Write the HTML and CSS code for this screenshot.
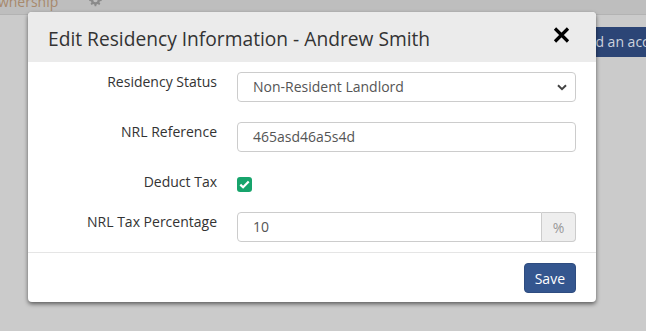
FILE: index.html
```html
<!DOCTYPE html>
<html>
<head>
<meta charset="utf-8">
<link rel="stylesheet" href="styles.css">
</head>
<body>
<div class="page">
  <div class="topbar">
    <span class="tab">Ownership</span>
    <svg class="gear" width="14" height="14" viewBox="0 0 16 16"><path fill="#8a8a8a" d="M9.4 1l.4 2 1.3.6 1.7-1.1 1.3 1.3-1.1 1.7.6 1.3 2 .4v1.8l-2 .4-.6 1.3 1.1 1.7-1.3 1.3-1.7-1.1-1.3.6-.4 2H7.6l-.4-2-1.3-.6-1.7 1.1-1.3-1.3 1.1-1.7-.6-1.3-2-.4V7.1l2-.4.6-1.3-1.1-1.7 1.3-1.3 1.7 1.1 1.3-.6.4-2zM8.5 5.5a2.5 2.5 0 100 5 2.5 2.5 0 000-5z"/></svg>
  </div>
  <div class="toolbar">
    <span class="addbtn">Add an account</span>
  </div>
</div>

<div class="modal">
  <div class="modal-header">
    <h4 class="modal-title">Edit Residency Information - Andrew Smith</h4>
    <svg class="close" width="17" height="16" viewBox="0 0 17 16"><path d="M2 1.5l13 13M15 1.5l-13 13" stroke="#000" stroke-width="3.2" stroke-linecap="butt"/></svg>
  </div>
  <div class="modal-body">
    <div class="row">
      <label class="lbl">Residency Status</label>
      <div class="ctl">
        <div class="select">
          <span>Non-Resident Landlord</span>
          <svg width="10" height="7" viewBox="0 0 10 7"><path d="M1 1.2l4 4 4-4" fill="none" stroke="#444" stroke-width="2"/></svg>
        </div>
      </div>
    </div>
    <div class="row">
      <label class="lbl">NRL Reference</label>
      <div class="ctl"><div class="input">465asd46a5s4d</div></div>
    </div>
    <div class="row row-check">
      <label class="lbl">Deduct Tax</label>
      <div class="ctl">
        <span class="check"><svg width="11" height="9" viewBox="0 0 11 9"><path d="M1.3 4.6l2.8 2.7L9.7 1.6" fill="none" stroke="#fff" stroke-width="2.2"/></svg></span>
      </div>
    </div>
    <div class="row">
      <label class="lbl">NRL Tax Percentage</label>
      <div class="ctl">
        <div class="group">
          <div class="input grow">10</div>
          <span class="addon">%</span>
        </div>
      </div>
    </div>
  </div>
  <div class="modal-footer">
    <button class="save">Save</button>
  </div>
</div>
</body>
</html>
```
FILE: styles.css
```css
html, body {
  margin: 0;
  padding: 0;
}
body {
  width: 646px;
  height: 331px;
  overflow: hidden;
  background: #cbcbcb;
  font-family: "Open Sans", "Liberation Sans", sans-serif;
  position: relative;
}
.page {
  height: 331px;
  overflow: hidden;
}
.topbar {
  height: 14px;
  background: #bebebe;
  border-bottom: 1px solid #b3b3b3;
  display: flex;
  align-items: flex-end;
  overflow: hidden;
}
.tab {
  font-size: 14px;
  color: #a8896c;
  margin-left: -13px;
  line-height: 18px;
  margin-bottom: 3px;
}
.gear {
  margin-left: 30px;
  margin-bottom: 7px;
}
.toolbar {
  display: flex;
  padding-top: 12px;
}
.addbtn {
  margin-left: 568px;
  white-space: nowrap;
  background: #2c4576;
  color: #cdd3de;
  font-size: 14px;
  height: 30px;
  line-height: 30px;
  padding: 0 10px;
  border-radius: 3px;
}
.modal {
  position: absolute;
  left: 28px;
  top: 12px;
  width: 568px;
  height: 290px;
  background: #fff;
  border-radius: 4px;
  box-shadow: 0 2px 4px rgba(0,0,0,0.55);
  overflow: hidden;
}
.modal-header {
  height: 50px;
  background: #ebebeb;
  display: flex;
  align-items: center;
  padding: 0 20px;
}
.modal-title {
  margin: 0;
  flex: 1;
  font-weight: normal;
  font-size: 19.2px;
  color: #333;
  padding-top: 2px;
}
.close {
  margin-right: 6px;
  margin-top: -4px;
}
.modal-body {
  padding: 10px 20px 0 20px;
  height: 180px;
  border-bottom: 1px solid #e5e5e5;
}
.row {
  display: flex;
  height: 50px;
}
.row-check {
  height: 40px;
}
.lbl {
  box-sizing: border-box;
  width: 189px;
  text-align: right;
  font-size: 14px;
  color: #333;
  line-height: 20px;
  padding-right: 20px;
}
.ctl {
  flex: 1;
}
.select, .input {
  height: 30px;
  box-sizing: border-box;
  border: 1px solid #ccc;
  border-radius: 4px;
  font-size: 14px;
  color: #555;
  padding: 0 15px;
  line-height: 28px;
  display: flex;
  align-items: center;
}
.select span {
  flex: 1;
}
.select svg {
  margin-right: -7px;
}
.check {
  display: inline-flex;
  width: 15px;
  height: 15px;
  background: #17a46c;
  border-radius: 3px;
  align-items: center;
  justify-content: center;
  margin-top: 3px;
}
.group {
  display: flex;
}
.grow {
  flex: 1;
  border-radius: 4px 0 0 4px;
}
.addon {
  width: 34px;
  height: 30px;
  box-sizing: border-box;
  border: 1px solid #ccc;
  border-left: none;
  border-radius: 0 4px 4px 0;
  background: #eee;
  color: #999;
  font-size: 14px;
  display: flex;
  align-items: center;
  justify-content: center;
}
.modal-footer {
  display: flex;
  justify-content: flex-end;
  padding: 10px 20px;
}
.save {
  background: #34568f;
  color: #fff;
  border: 1px solid #2e4c80;
  border-radius: 4px;
  font-family: "Open Sans", "Liberation Sans", sans-serif;
  font-size: 14px;
  height: 30px;
  padding: 0 10px;
}
```
